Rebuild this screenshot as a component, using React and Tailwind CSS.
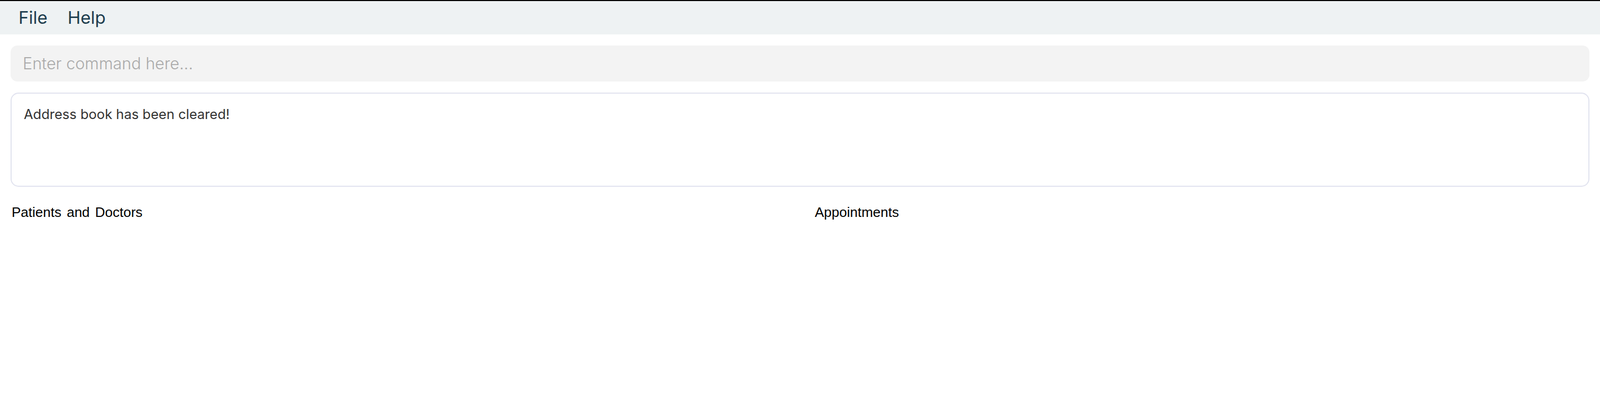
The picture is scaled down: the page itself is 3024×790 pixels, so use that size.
import React from 'react';

const MenuBar = () => (
  <div className="flex items-center h-[63px] bg-[#eef2f3] pl-[35px] gap-[38px] text-[33px] text-[#1d3d4d]" style={{ fontFamily: 'Inter, sans-serif' }}>
    <span>File</span>
    <span>Help</span>
  </div>
);

export default function App() {
  return (
    <div className="w-[3024px] h-[790px] bg-white overflow-hidden">
      <div className="h-[2px] bg-black" />
      <MenuBar />
      <div className="px-[20px] pt-[21px]" style={{ fontFamily: 'Inter, sans-serif' }}>
        <div className="h-[68px] rounded-[13px] bg-[#f3f3f3] flex items-center pl-[23px]">
          <input
            className="w-full bg-transparent outline-none text-[30.5px] font-light text-[#333] placeholder:text-[#aaaaaa]"
            placeholder="Enter command here..."
          />
        </div>
        <div className="mt-[21px] h-[178px] rounded-[15px] border-2 border-[#e1e3ef] pl-[23px] pt-[20px] text-[25.5px] text-[#333333]">
          Address book has been cleared!
        </div>
      </div>
      <div className="grid grid-cols-2 pt-[29px] text-[26px] text-black [word-spacing:3px]" style={{ fontFamily: '"Liberation Sans", Arial, sans-serif' }}>
        <div className="pl-[22px]">Patients and Doctors</div>
        <div className="pl-[28px]">Appointments</div>
      </div>
    </div>
  );
}
